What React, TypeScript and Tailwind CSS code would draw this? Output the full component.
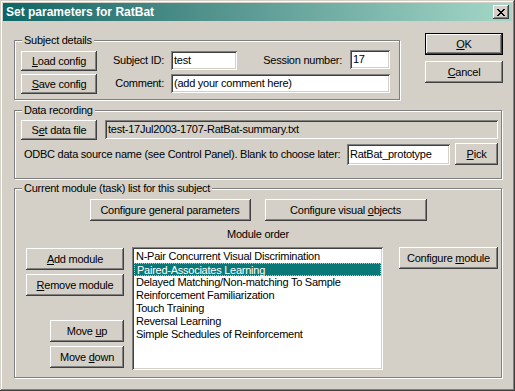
import type { ReactNode } from 'react';

const raised =
  'shadow-[inset_-1px_-1px_#404040,inset_1px_1px_#ffffff,inset_-2px_-2px_#808080,inset_2px_2px_#d4d0c8]';
const sunken =
  'shadow-[inset_1px_1px_#808080,inset_-1px_-1px_#ffffff,inset_2px_2px_#404040,inset_-2px_-2px_#d4d0c8]';

const modules = [
  'N-Pair Concurrent Visual Discrimination',
  'Paired-Associates Learning',
  'Delayed Matching/Non-matching To Sample',
  'Reinforcement Familiarization',
  'Touch Training',
  'Reversal Learning',
  'Simple Schedules of Reinforcement',
];

function Button({ className = '', children }: { className?: string; children: ReactNode }) {
  return (
    <div className={`flex shrink-0 items-center justify-center bg-[#d4d0c8] leading-[13px] ${raised} ${className}`}>
      <span className="whitespace-nowrap">{children}</span>
    </div>
  );
}

function Field({ className = '', gray, children }: { className?: string; gray?: boolean; children: ReactNode }) {
  return (
    <div
      className={`flex shrink-0 items-center overflow-hidden whitespace-nowrap pl-[3px] leading-[13px] ${sunken} ${
        gray ? 'bg-[#d4d0c8]' : 'bg-white'
      } ${className}`}
    >
      {children}
    </div>
  );
}

function Group({ label, className = '', children }: { label: string; className?: string; children: ReactNode }) {
  return (
    <div className={`shrink-0 border border-[#808080] shadow-[1px_1px_0_#ffffff,inset_1px_1px_0_#ffffff] ${className}`}>
      <div className="-mt-[7px] ml-[7px] w-fit bg-[#d4d0c8] px-[2px] leading-[13px] whitespace-nowrap">{label}</div>
      {children}
    </div>
  );
}

function CloseGlyph() {
  const rows = ['11000011', '01100110', '00111100', '00011000', '00111100', '01100110', '11000011'];
  return (
    <svg width="8" height="7" viewBox="0 0 8 7" shapeRendering="crispEdges">
      {rows.flatMap((r, y) =>
        r.split('').map((c, x) => (c === '1' ? <rect key={`${x}-${y}`} x={x} y={y} width="1" height="1" fill="#000" /> : null))
      )}
    </svg>
  );
}

export default function App() {
  return (
    <div
      className={`h-[391px] w-[515px] overflow-hidden bg-[#d4d0c8] p-[3px] font-['Liberation_Sans',Arial,sans-serif] text-[11px] tracking-[-0.25px] text-black shadow-[inset_-1px_-1px_#404040,inset_1px_1px_#d4d0c8,inset_-2px_-2px_#808080,inset_2px_2px_#ffffff]`}
    >
      {/* title bar */}
      <div className="flex h-[18px] items-center bg-linear-to-r from-[#0a6666] to-[#a4d8c8] pl-[3px]">
        <span className="text-[12px] font-bold leading-[14px] tracking-normal text-white">Set parameters for RatBat</span>
        <div className={`ml-auto mr-[3px] flex h-[14px] w-[16px] items-center justify-center bg-[#d4d0c8] ${raised}`}>
          <CloseGlyph />
        </div>
      </div>

      <div className="pl-[11px] pr-[10px]">
        <div className="flex items-start">
          <Group label="Subject details" className="mt-[19px] h-[60px] w-[386px]">
            <div className="mt-[4px] flex items-start pl-[6px]">
              <Button className="h-[20px] w-[76px]">
                <u>L</u>oad config
              </Button>
              <div className="flex h-[19px] w-[74px] shrink-0 items-center justify-end pr-[7px]">Subject ID:</div>
              <Field className="h-[19px] w-[66px]">test</Field>
              <div className="flex h-[19px] w-[113px] shrink-0 items-center justify-end pr-[8px]">Session number:</div>
              <Field className="-mt-[1px] h-[19px] w-[40px]">17</Field>
            </div>
            <div className="mt-[3px] flex items-start pl-[6px]">
              <Button className="h-[20px] w-[76px]">
                <u>S</u>ave config
              </Button>
              <div className="flex h-[19px] w-[74px] shrink-0 items-center justify-end pr-[7px]">Comment:</div>
              <Field className="h-[19px] w-[219px]">(add your comment here)</Field>
            </div>
          </Group>

          <div className="ml-[25px] mt-[12px] flex flex-col">
            <div className="border border-black">
              <Button className="h-[20px] w-[76px]">
                <u>O</u>K
              </Button>
            </div>
            <Button className="mt-[6px] h-[22px] w-[78px]">
              <u>C</u>ancel
            </Button>
          </div>
        </div>

        <Group label="Data recording" className="mt-[10px] h-[69px] w-[488px]">
          <div className="mt-[3px] flex items-start pl-[6px]">
            <Button className="h-[20px] w-[76px]">
              S<u>e</u>t data file
            </Button>
            <Field gray className="ml-[8px] h-[19px] w-[393px]">
              test-17Jul2003-1707-RatBat-summary.txt
            </Field>
          </div>
          <div className="mt-[3px] flex h-[22px] items-center">
            <span className="ml-[9px] whitespace-nowrap">
              ODBC data source name (see Control Panel). Blank to choose later:
            </span>
            <Field className="ml-auto h-[21px] w-[103px]">RatBat_prototype</Field>
            <Button className="ml-[5px] mr-[3px] h-[22px] w-[43px]">
              <u>P</u>ick
            </Button>
          </div>
        </Group>

        <Group label="Current module (task) list for this subject" className="mt-[9px] h-[190px] w-[488px]">
          <div className="mt-[4px] flex justify-center gap-[14px]">
            <Button className="h-[22px] w-[161px]">Configure general parameters</Button>
            <Button className="h-[22px] w-[162px]">
              Configure visual <u>o</u>bjects
            </Button>
          </div>
          <div className="mt-[7px] text-center leading-[13px]">Module order</div>
          <div className="mt-[6px] flex items-start">
            <div className="ml-[11px] flex w-[98px] shrink-0 flex-col items-end">
              <Button className="mt-[1px] h-[22px] w-[98px]">
                <u>A</u>dd module
              </Button>
              <Button className="mt-[4px] h-[22px] w-[98px]">
                <u>R</u>emove module
              </Button>
              <Button className="mt-[24px] h-[22px] w-[74px]">
                Move <u>u</u>p
              </Button>
              <Button className="mt-[4px] h-[22px] w-[74px]">
                Move <u>d</u>own
              </Button>
            </div>
            <div className={`ml-[8px] h-[123px] w-[251px] shrink-0 bg-white px-[2px] pt-[3px] ${sunken}`}>
              {modules.map((m, i) => (
                <div
                  key={m}
                  className={`h-[13px] whitespace-nowrap pl-[2px] leading-[13px] ${
                    i === 1 ? 'border border-dotted border-[#9fd0d0] bg-[#0b7878] pl-[1px] leading-[11px] text-white' : ''
                  }`}
                >
                  {m}
                </div>
              ))}
            </div>
            <Button className="ml-[16px] h-[22px] w-[99px]">
              Configure <u>m</u>odule
            </Button>
          </div>
        </Group>
      </div>
    </div>
  );
}
